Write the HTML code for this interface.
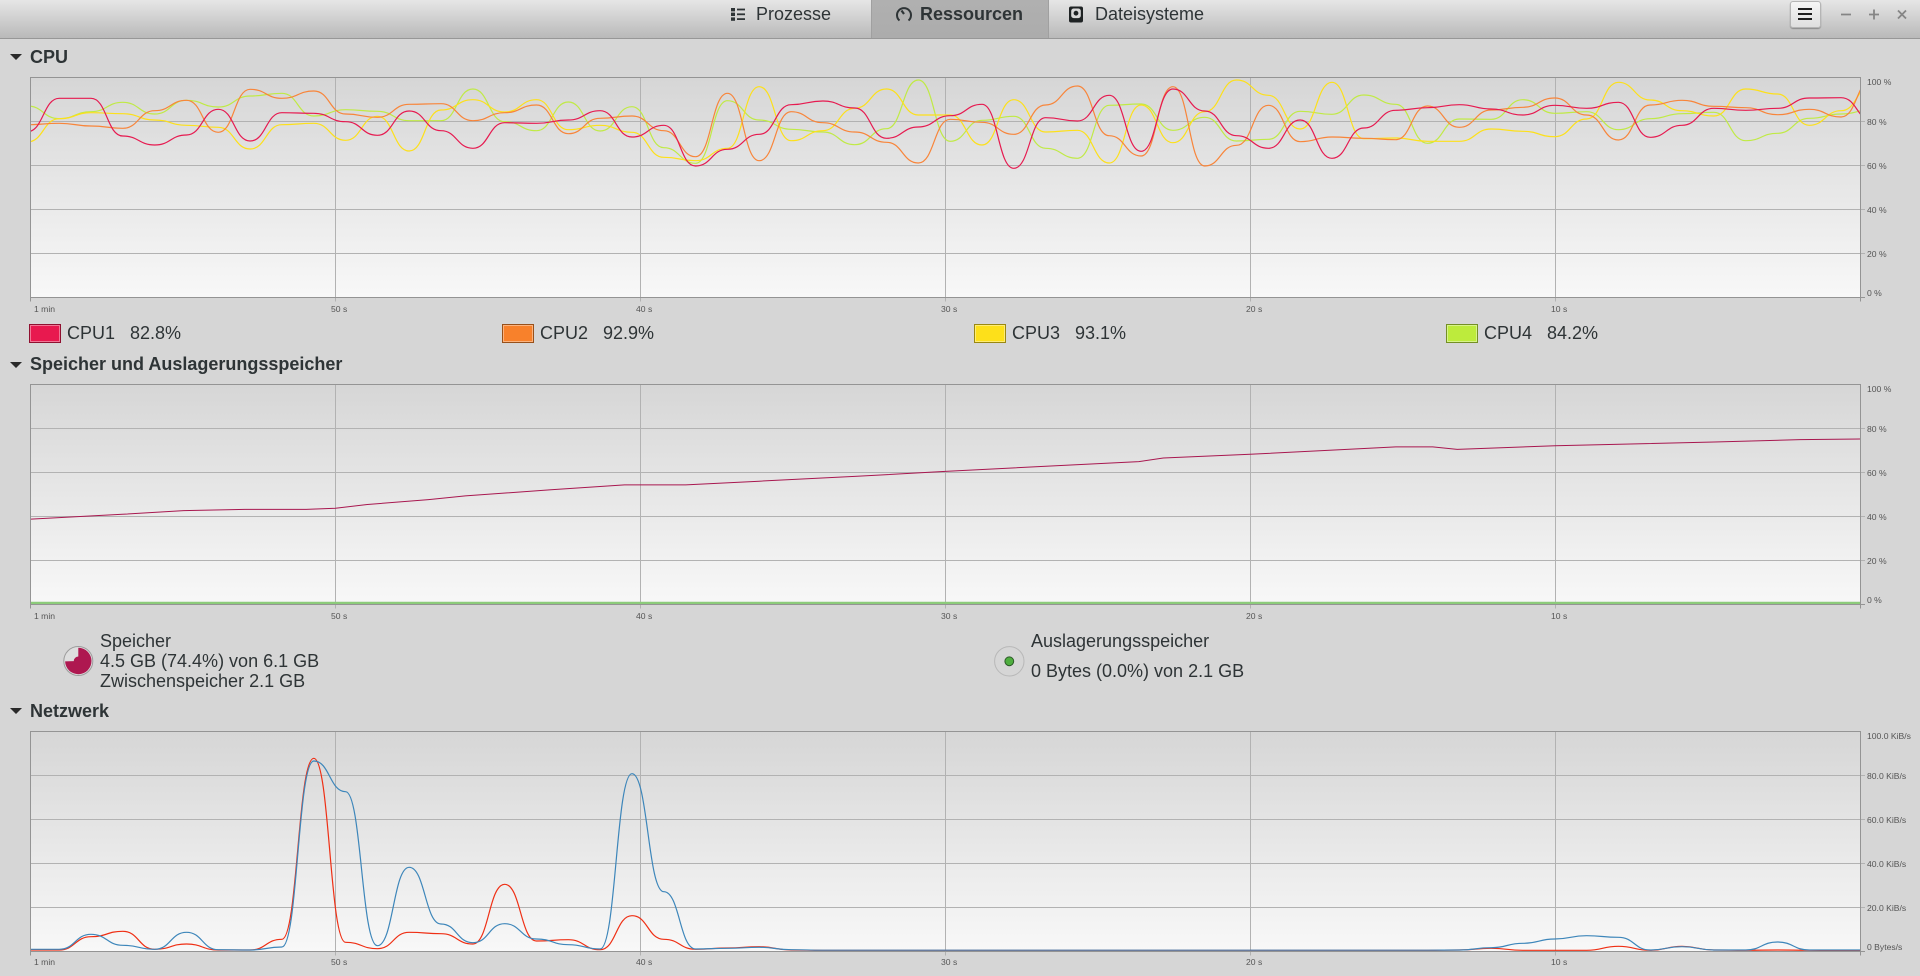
<!DOCTYPE html>
<html lang="de"><head><meta charset="utf-8"><title>Systemüberwachung</title>
<style>
html,body{margin:0;padding:0;width:1920px;height:976px;overflow:hidden;background:#d6d6d6}
body{position:relative;font-family:"Liberation Sans",sans-serif;color:#2e3436}
#hdr{position:absolute;left:0;top:0;width:1920px;height:38px;background:linear-gradient(#e6e6e6,#b9b9b9);border-bottom:1px solid #979797}
#act{position:absolute;left:871px;top:0;width:178px;height:38px;background:linear-gradient(#b0b0b0,#acacac);box-shadow:inset 1px 0 #a0a0a0,inset -1px 0 #a0a0a0}
#btn{position:absolute;left:1790px;top:1px;width:29px;height:25px;border:1px solid #b5b5b5;border-radius:3px;background:linear-gradient(#f5f5f5,#dfdfdf);box-shadow:0 1px 1px #8a8a8a}
.t{position:absolute;white-space:nowrap;font-size:18px;line-height:20px;height:20px}
.b{font-weight:bold}
.l{position:absolute;white-space:nowrap;font-size:8.6px;line-height:10px;height:10px;color:#555}
.sw{position:absolute;width:30px;height:17px;top:324px;border:1px solid;box-shadow:inset 0 0 0 1px rgba(255,255,255,.4)}
svg{position:absolute;left:0;top:0}
</style></head><body>
<div id="hdr"></div><div id="act"></div><div id="btn"></div>
<svg width="1920" height="976" viewBox="0 0 1920 976">
<defs>
<linearGradient id="g" x1="0" y1="0" x2="0" y2="1"><stop offset="0" stop-color="#d6d6d6"/><stop offset="1" stop-color="#f8f8f8"/></linearGradient>
<g id="chart">
<rect x="30.5" y="0" width="1830" height="220" fill="url(#g)"/>
<path d="M30.5 44H1865M30.5 88H1865M30.5 132H1865M30.5 176H1865" stroke="#b2b2b2" fill="none"/>
<path d="M335.5 0V224M640.5 0V224M945.5 0V224M1250.5 0V224M1555.5 0V224" stroke="#b2b2b2" fill="none"/>
<path d="M30.5 224V0H1860.5V224M30.5 220H1865" stroke="#949494" fill="none"/>
</g>
<clipPath id="c1"><rect x="31" y="78" width="1829" height="219"/></clipPath>
<clipPath id="c2"><rect x="31" y="385" width="1829" height="219"/></clipPath>
<clipPath id="c3"><rect x="31" y="732" width="1829" height="219"/></clipPath>
</defs>
<use href="#chart" y="77.5"/><use href="#chart" y="384.5"/><use href="#chart" y="731.5"/>
<g id="cpu" clip-path="url(#c1)" fill="none" stroke-width="1.2"></g>
<g clip-path="url(#c2)" fill="none">
<path d="M31 603H1860" stroke="#8ccb7a" stroke-width="2.4"/>
<path id="mem" stroke="#a8174f" stroke-width="1"/>
</g>
<g id="net" clip-path="url(#c3)" fill="none" stroke-width="1.2"></g>
<!-- triangles -->
<path d="M10 54H22L16 60Z M10 362H22L16 368Z M10 708H22L16 714Z" fill="#2a2a2a"/>
<!-- Prozesse icon -->
<g fill="#2e3436"><rect x="731" y="8" width="4" height="3.4"/><rect x="731" y="12.6" width="4" height="3.4"/><rect x="731" y="17.4" width="4" height="3.4"/><rect x="737" y="8.6" width="8" height="1.8"/><rect x="737" y="13.4" width="8" height="1.8"/><rect x="737" y="18.2" width="8" height="1.8"/></g>
<!-- Ressourcen icon -->
<g fill="none" stroke="#2e3436" stroke-width="2"><path d="M899.5 20.5A7 7 0 1 1 908.5 20.5"/><path d="M904 14L901.5 10.5" stroke-width="2.2"/></g>
<!-- Dateisysteme icon -->
<rect x="1069" y="6.5" width="14" height="16" rx="2" fill="#1f2324"/><rect x="1071.2" y="8.5" width="9.6" height="9.6" rx="2.5" fill="#d8d8d8"/><circle cx="1076" cy="13.2" r="2.4" fill="#1f2324"/>
<!-- hamburger -->
<g fill="#1f1f1f"><rect x="1798" y="8" width="14" height="2"/><rect x="1798" y="13" width="14" height="2"/><rect x="1798" y="18" width="14" height="2"/></g>
<!-- window buttons -->
<g stroke="#858585" stroke-width="1.8" fill="none"><path d="M1841 14.5H1851M1869 14.5H1879M1874 9.5V19.5M1898 10.5L1906 18.5M1906 10.5L1898 18.5"/></g>
<!-- memory pie -->
<circle cx="78.3" cy="661" r="14.5" fill="#dedede" stroke="#9c9c9c"/>
<path d="M78.3 661V647.8A13.2 13.2 0 1 1 65.1 661.4Z" fill="#ae1850"/>
<circle cx="78.3" cy="661" r="4.5" fill="#ae1850"/>
<!-- swap icon -->
<circle cx="1009.3" cy="661.3" r="14.7" fill="#d6d6d6" stroke="#b8b8b8" stroke-width="1"/>
<circle cx="1009.3" cy="661.3" r="4.4" fill="#4fae3f" stroke="#2c5a28" stroke-width="1"/>
</svg>

<div class="t" style="left:756px;top:4px;">Prozesse</div>
<div class="t b" style="left:920px;top:4px;">Ressourcen</div>
<div class="t" style="left:1095px;top:4px;">Dateisysteme</div>

<div class="t b" style="left:30px;top:47px;">CPU</div>
<div class="t b" style="left:30px;top:354px;">Speicher und Auslagerungsspeicher</div>
<div class="t b" style="left:30px;top:701px;">Netzwerk</div>

<div class="sw" style="left:29px;background:#e8194f;border-color:#8f1030"></div>
<div class="t" style="left:67px;top:323px;">CPU1</div><div class="t" style="left:130px;top:323px;">82.8%</div>
<div class="sw" style="left:502px;background:#f8812b;border-color:#98501a"></div>
<div class="t" style="left:540px;top:323px;">CPU2</div><div class="t" style="left:603px;top:323px;">92.9%</div>
<div class="sw" style="left:974px;background:#fde01a;border-color:#9a8810"></div>
<div class="t" style="left:1012px;top:323px;">CPU3</div><div class="t" style="left:1075px;top:323px;">93.1%</div>
<div class="sw" style="left:1446px;background:#bdeb3c;border-color:#748f25"></div>
<div class="t" style="left:1484px;top:323px;">CPU4</div><div class="t" style="left:1547px;top:323px;">84.2%</div>

<div class="t" style="left:100px;top:631px;">Speicher</div>
<div class="t" style="left:100px;top:651px;">4.5 GB (74.4%) von 6.1 GB</div>
<div class="t" style="left:100px;top:671px;">Zwischenspeicher 2.1 GB</div>
<div class="t" style="left:1031px;top:631px;">Auslagerungsspeicher</div>
<div class="t" style="left:1031px;top:661px;">0 Bytes (0.0%) von 2.1 GB</div>

<div class="l" style="left:34px;top:304px">1 min</div><div class="l" style="left:331px;top:304px">50 s</div><div class="l" style="left:636px;top:304px">40 s</div><div class="l" style="left:941px;top:304px">30 s</div><div class="l" style="left:1246px;top:304px">20 s</div><div class="l" style="left:1551px;top:304px">10 s</div>
<div class="l" style="left:34px;top:611px">1 min</div><div class="l" style="left:331px;top:611px">50 s</div><div class="l" style="left:636px;top:611px">40 s</div><div class="l" style="left:941px;top:611px">30 s</div><div class="l" style="left:1246px;top:611px">20 s</div><div class="l" style="left:1551px;top:611px">10 s</div>
<div class="l" style="left:34px;top:957px">1 min</div><div class="l" style="left:331px;top:957px">50 s</div><div class="l" style="left:636px;top:957px">40 s</div><div class="l" style="left:941px;top:957px">30 s</div><div class="l" style="left:1246px;top:957px">20 s</div><div class="l" style="left:1551px;top:957px">10 s</div>

<div class="l" style="left:1867px;top:77px">100 %</div><div class="l" style="left:1867px;top:117px">80 %</div><div class="l" style="left:1867px;top:161px">60 %</div><div class="l" style="left:1867px;top:205px">40 %</div><div class="l" style="left:1867px;top:249px">20 %</div><div class="l" style="left:1867px;top:288px">0 %</div>
<div class="l" style="left:1867px;top:384px">100 %</div><div class="l" style="left:1867px;top:424px">80 %</div><div class="l" style="left:1867px;top:468px">60 %</div><div class="l" style="left:1867px;top:512px">40 %</div><div class="l" style="left:1867px;top:556px">20 %</div><div class="l" style="left:1867px;top:595px">0 %</div>
<div class="l" style="left:1867px;top:731px">100.0 KiB/s</div><div class="l" style="left:1867px;top:771px">80.0 KiB/s</div><div class="l" style="left:1867px;top:815px">60.0 KiB/s</div><div class="l" style="left:1867px;top:859px">40.0 KiB/s</div><div class="l" style="left:1867px;top:903px">20.0 KiB/s</div><div class="l" style="left:1867px;top:942px">0 Bytes/s</div>

<script>
var NS='http://www.w3.org/2000/svg';
function P(ys){var d='',h=31.82/2;for(var i=0;i<ys.length;i++){var x=59.2+31.82*(i-1),y=ys[i].toFixed(1);
 if(i==0)d='M'+x.toFixed(1)+' '+y;else d+='C'+(x-h).toFixed(1)+' '+ys[i-1].toFixed(1)+' '+(x-h).toFixed(1)+' '+y+' '+x.toFixed(1)+' '+y;}return d}
function add(g,ys,c){var p=document.createElementNS(NS,'path');p.setAttribute('d',P(ys));p.setAttribute('stroke',c);g.appendChild(p)}
function cv(a,b){return a.map(function(Y){return 40+Y/3}).concat(b.map(function(Y){return 70+Y/3}))}
var cpu=document.getElementById('cpu');
var red=cv([275,175,175,288,315,285,208,303,218,220,245,286,213,272,325,248,250,240,212,291],
[166,288,238,193,104,93,114,205,171,137,103,295,143,153,76,244,57,123,197,235,150,265,174,121,113,104,117,135,106,115,97,202,166,115,121,115,84,83,153]);
var ora=cv([254,250,258,265,212,181,277,148,175,153,222,232,193,191,242,218,195,281,235,228],
[182,260,70,272,125,158,186,217,279,148,157,193,105,48,197,258,50,288,226,106,215,201,205,209,108,172,120,112,84,135,210,105,91,109,113,134,118,141,25]);
var yel=cv([306,236,218,221,240,256,262,327,254,250,301,229,333,210,179,216,179,269,256,277],
[262,272,235,50,212,182,115,57,135,135,225,89,186,181,279,105,218,125,30,76,177,37,206,204,214,214,177,184,200,147,37,90,122,138,57,72,166,122,44]);
var gre=cv([198,236,215,187,222,181,201,168,160,228,209,214,242,242,147,245,272,186,273,200],
[233,280,92,150,178,186,224,176,30,214,151,139,235,265,106,102,181,142,213,208,124,133,75,103,220,147,148,89,130,125,179,146,131,127,212,190,145,132,118]);
add(cpu,gre,'#c0ea45');add(cpu,yel,'#fde01a');add(cpu,ora,'#f8853a');add(cpu,red,'#e61a50');

var pts=[[25,424],[100,420],[150,417],[200,416],[250,416],[274,415],[300,412],[350,408],[380,405],[450,400],[510,396],[560,396],[620,393],[700,389],[772,385],[850,381],[930,377],[950,374],[1021,371],[1100,367],[1140,365],[1170,365],[1190,367],[1270,364],[1400,361],[1470,359],[1520,358.5]];
document.getElementById('mem').setAttribute('d','M'+pts.map(function(p){return (p[0]*1.2245).toFixed(1)+' '+(p[1]*1.2245).toFixed(1)}).join('L'));

function fill(n,v){var a=[];for(var i=0;i<n;i++)a.push(v);return a}
var net=document.getElementById('net');
var m=function(Y){return 730+Y/3};
var bl=[658,658,613,646,658,607,659,660,651,93,185,647,412,582,638,581,627,644,657,131,485,657,655,652,659].concat(fill(20,660.5),[660,653,640,627,617,622,660,650,660,660,636,660,660,660]).map(m);
var rd=[660,660,620,604,658,642,660,660,628,85,637,656,607,611,642,463,633,629,659,557,628,658,654,650,660].concat(fill(20,661),[660,655,661,661,661,649,661,649,660,661,660,661,662,662]).map(m);
add(net,rd,'#ef2f14');add(net,bl,'#3d86ba');
</script>
</body></html>
